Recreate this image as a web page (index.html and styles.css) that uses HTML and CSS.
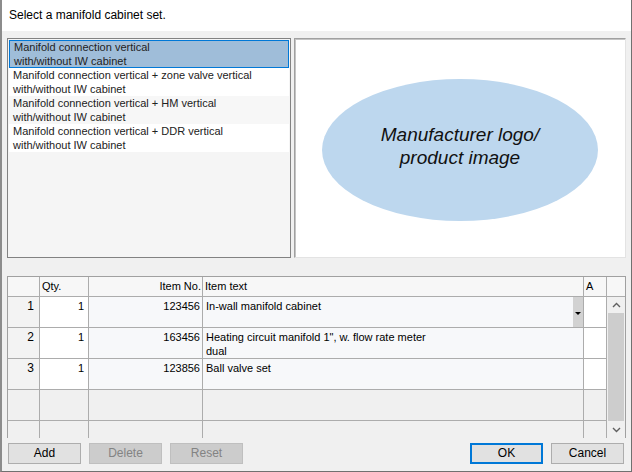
FILE: index.html
```html
<!DOCTYPE html>
<html>
<head>
<meta charset="utf-8">
<link rel="stylesheet" href="styles.css">
</head>
<body>
<div class="dialog">
  <div class="title">Select a manifold cabinet set.</div>
  <div class="content">
    <div class="top">
      <div class="listbox">
        <div class="item selected">Manifold connection vertical<br>with/without IW cabinet</div>
        <div class="item">Manifold connection vertical + zone valve vertical<br>with/without IW cabinet</div>
        <div class="item alt">Manifold connection vertical + HM vertical<br>with/without IW cabinet</div>
        <div class="item">Manifold connection vertical + DDR vertical<br>with/without IW cabinet</div>
      </div>
      <div class="preview">
        <div class="ellipse">Manufacturer logo/<br>product image</div>
      </div>
    </div>

    <div class="grid">
      <div class="grid-head">
        <div class="hcell"></div>
        <div class="hcell">Qty.</div>
        <div class="hcell right">Item No.</div>
        <div class="hcell">Item text</div>
        <div class="hcell">A</div>
        <div class="hcell"></div>
      </div>
      <div class="grid-body">
        <div class="rows">
          <div class="rh">1</div>
          <div class="q">1</div>
          <div class="no">123456</div>
          <div class="tx"><span class="txt">In-wall manifold cabinet</span><span class="dd"><span class="tri"></span></span></div>
          <div class="a"></div>

          <div class="rh">2</div>
          <div class="q">1</div>
          <div class="no">163456</div>
          <div class="tx"><span class="txt">Heating circuit manifold 1", w. flow rate meter<br>dual</span></div>
          <div class="a"></div>

          <div class="rh">3</div>
          <div class="q">1</div>
          <div class="no">123856</div>
          <div class="tx"><span class="txt">Ball valve set</span></div>
          <div class="a"></div>

          <div class="e"></div><div class="e"></div><div class="e"></div><div class="e"></div><div class="e"></div>
          <div class="e"></div><div class="e"></div><div class="e"></div><div class="e"></div><div class="e"></div>
        </div>
        <div class="vscroll">
          <div class="arrow">
            <svg width="9" height="6" viewBox="0 0 9 6"><polyline points="1,5 4.5,1.5 8,5" fill="none" stroke="#606060" stroke-width="1.4"/></svg>
          </div>
          <div class="thumb"></div>
          <div class="arrow">
            <svg width="9" height="6" viewBox="0 0 9 6"><polyline points="1,1 4.5,4.5 8,1" fill="none" stroke="#606060" stroke-width="1.4"/></svg>
          </div>
        </div>
      </div>
    </div>

    <div class="buttons">
      <button class="btn">Add</button>
      <button class="btn disabled">Delete</button>
      <button class="btn disabled">Reset</button>
      <div class="spacer"></div>
      <button class="btn default">OK</button>
      <button class="btn">Cancel</button>
    </div>
  </div>
</div>
</body>
</html>
```
FILE: styles.css
```css
html, body {
  margin: 0;
  padding: 0;
  background: #f0f0f0;
  font-family: "Liberation Sans", Arial, sans-serif;
}

.dialog {
  width: 632px;
  height: 472px;
  box-sizing: border-box;
  border-left: 2px solid #8c8c8c;
  border-right: 1px solid #707070;
  border-bottom: 1px solid #707070;
  background: #f0f0f0;
  display: flex;
  flex-direction: column;
}

.title {
  flex: none;
  height: 31px;
  background: #fff;
  padding-left: 7px;
  font-size: 12px;
  line-height: 31px;
  color: #000;
}

.content {
  flex: 1;
  display: flex;
  flex-direction: column;
  padding: 7px 5px 7px 5px;
}

.top {
  display: flex;
  gap: 3px;
  height: 220px;
  flex: none;
}

.listbox {
  width: 284px;
  box-sizing: border-box;
  border: 1px solid #828282;
  background: #f5f5f5;
  padding: 1px;
  font-size: 11px;
  line-height: 14px;
  color: #222;
}

.item {
  height: 28px;
  padding-left: 4px;
  background: #fff;
  white-space: nowrap;
}

.item.alt {
  background: #f7f7f7;
}

.item.selected {
  background: #9fbdd9;
  box-shadow: inset 0 0 0 1px #0078d7;
  padding-left: 5px;
}

.preview {
  flex: 1;
  box-sizing: border-box;
  background: #fff;
  border: 1px solid;
  border-color: #a0a0a0 #e3e3e3 #e3e3e3 #a0a0a0;
  box-shadow: inset 1px 1px 0 #c4c4c4;
  padding-top: 3px;
  display: flex;
  align-items: center;
  justify-content: center;
}

.ellipse {
  width: 276px;
  height: 142px;
  box-sizing: border-box;
  padding-bottom: 8px;
  border-radius: 50%;
  background: #bdd7ee;
  display: flex;
  align-items: center;
  justify-content: center;
  text-align: center;
  font-style: italic;
  font-size: 19px;
  line-height: 23px;
  color: #111;
}

.grid {
  flex: none;
  margin-top: 18px;
  height: 162px;
  box-sizing: border-box;
  border: 1px solid #a0a0a0;
  border-bottom: none;
  background: #f0f0f0;
  overflow: hidden;
  font-size: 11px;
  color: #000;
}

.grid-head {
  display: grid;
  grid-template-columns: 31px 48px 113px 380px 22px 18px;
  column-gap: 1px;
  height: 19px;
  background: #acacac;
  border-bottom: 1px solid #acacac;
}

.hcell {
  background: #f7f7f7;
  line-height: 19px;
  padding: 0 2px;
  white-space: nowrap;
  overflow: hidden;
}

.hcell.right {
  text-align: right;
  padding-right: 1px;
}

.grid-body {
  display: flex;
  height: 141px;
}

.rows {
  width: 598px;
  padding-right: 1px;
  display: grid;
  grid-template-columns: 31px 48px 113px 380px 22px;
  grid-auto-rows: 30px;
  gap: 1px;
  align-content: start;
  background: #acacac;
  overflow: hidden;
  line-height: 14px;
}

.rh {
  background: #f3f3f3;
  text-align: right;
  padding: 2px 5px 0 0;
  font-size: 12px;
}

.q {
  background: #fff;
  text-align: right;
  padding: 2px 4px 0 0;
}

.no {
  background: #f7f8fa;
  text-align: right;
  padding: 2px 2px 0 0;
}

.tx {
  background: #f7f8fa;
  display: flex;
}

.txt {
  flex: 1;
  padding: 2px 3px 0 3px;
  white-space: nowrap;
}

.dd {
  width: 10px;
  background: #d2d2d2;
  display: flex;
  align-items: center;
  justify-content: center;
}

.tri {
  width: 0;
  height: 0;
  border-left: 3px solid transparent;
  border-right: 3px solid transparent;
  border-top: 3px solid #000;
  margin-top: 2px;
}

.a {
  background: #fff;
}

.e {
  background: #f0f0f0;
}

.vscroll {
  width: 18px;
  display: flex;
  flex-direction: column;
  background: #f0f0f0;
}

.arrow {
  height: 16px;
  flex: none;
  display: flex;
  align-items: center;
  justify-content: center;
}

.thumb {
  flex: 1;
  margin: 0 1px 1px 1px;
  background: #cdcdcd;
}

.buttons {
  flex: none;
  margin-top: 5px;
  height: 21px;
  display: flex;
  gap: 8px;
  padding-left: 1px;
  padding-right: 2px;
}

.spacer {
  flex: 1;
}

.btn {
  width: 73px;
  height: 21px;
  box-sizing: border-box;
  margin: 0;
  padding: 0;
  border: 1px solid #adadad;
  background: #e1e1e1;
  font-family: "Liberation Sans", Arial, sans-serif;
  font-size: 12px;
  line-height: 19px;
  color: #000;
  text-align: center;
}

.btn.disabled {
  background: #cccccc;
  border-color: #bfbfbf;
  color: #838383;
}

.btn.default {
  border: 2px solid #0078d7;
  line-height: 17px;
}
```
